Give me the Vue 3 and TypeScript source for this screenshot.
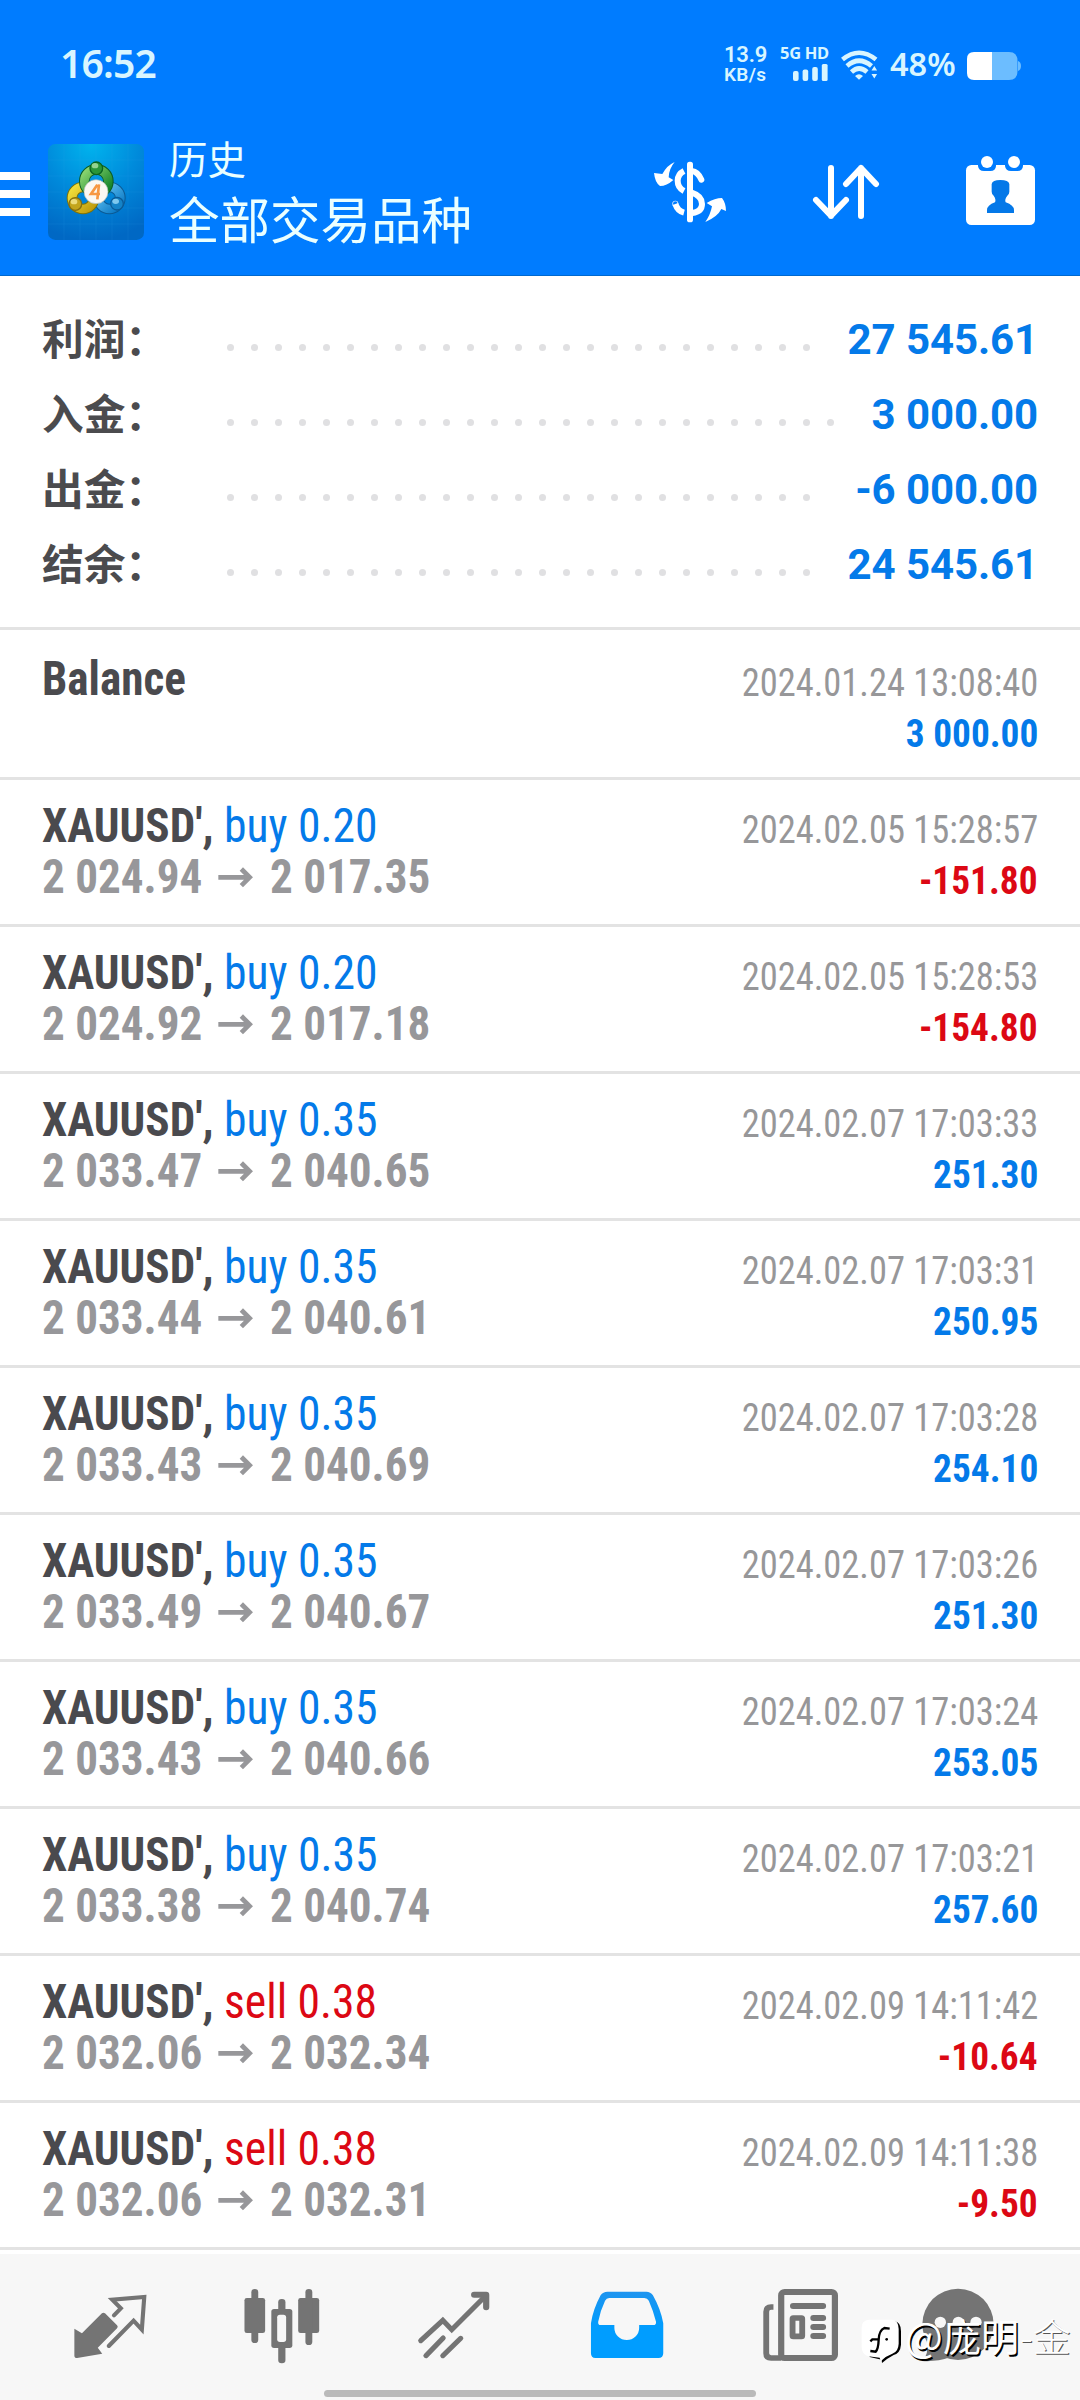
<script setup lang="ts">
interface SummaryRow { label: string; value: string; dots: number }
interface Deal { side: 'buy' | 'sell'; volume: string; open: string; close: string; time: string; profit: string }

const summary: SummaryRow[] = [
  { label: '利润：', value: '27 545.61', dots: 25 },
  { label: '入金：', value: '3 000.00', dots: 26 },
  { label: '出金：', value: '-6 000.00', dots: 25 },
  { label: '结余：', value: '24 545.61', dots: 25 },
]

const deals: Deal[] = [
  { side: 'buy', volume: '0.20', open: '2 024.94', close: '2 017.35', time: '2024.02.05 15:28:57', profit: '-151.80' },
  { side: 'buy', volume: '0.20', open: '2 024.92', close: '2 017.18', time: '2024.02.05 15:28:53', profit: '-154.80' },
  { side: 'buy', volume: '0.35', open: '2 033.47', close: '2 040.65', time: '2024.02.07 17:03:33', profit: '251.30' },
  { side: 'buy', volume: '0.35', open: '2 033.44', close: '2 040.61', time: '2024.02.07 17:03:31', profit: '250.95' },
  { side: 'buy', volume: '0.35', open: '2 033.43', close: '2 040.69', time: '2024.02.07 17:03:28', profit: '254.10' },
  { side: 'buy', volume: '0.35', open: '2 033.49', close: '2 040.67', time: '2024.02.07 17:03:26', profit: '251.30' },
  { side: 'buy', volume: '0.35', open: '2 033.43', close: '2 040.66', time: '2024.02.07 17:03:24', profit: '253.05' },
  { side: 'buy', volume: '0.35', open: '2 033.38', close: '2 040.74', time: '2024.02.07 17:03:21', profit: '257.60' },
  { side: 'sell', volume: '0.38', open: '2 032.06', close: '2 032.34', time: '2024.02.09 14:11:42', profit: '-10.64' },
  { side: 'sell', volume: '0.38', open: '2 032.06', close: '2 032.31', time: '2024.02.09 14:11:38', profit: '-9.50' },
]

const tone = (value: string) => (value.startsWith('-') ? 'red' : 'blue')
</script>

<template>
  <div class="screen">
    <header class="header">
      <div class="status">
        <span class="clock">16:52</span>
        <span class="speed"><b>13.9</b><i>KB/s</i></span>
        <span class="cell">
          <b>5G&nbsp;HD</b>
          <svg width="35" height="17" viewBox="0 0 35 17">
            <rect x="0" y="7" width="5.6" height="10" rx="2" />
            <rect x="9.6" y="5.5" width="5.6" height="11.5" rx="2" />
            <rect x="19.2" y="3" width="5.6" height="14" rx="2" />
            <rect x="28.8" y="0" width="5.8" height="17" rx="1.5" />
          </svg>
        </span>
        <svg class="wifi" width="38" height="30" viewBox="0 0 38 30">
          <g fill="none" stroke="#d8f5ff" stroke-width="4.6">
            <path d="M1.5 9.5 Q18 -4 35 9.5" />
            <path d="M6 16 Q18 5.500 30.500 16" />
            <path d="M10.500 22 Q18 15 26 22" />
          </g>
          <path d="M14 26 Q18 22.500 22 26 L18 29.800 Z M30.500 20.500 L33.300 16 L36.100 20.500 Z M30.500 24 L33.300 28.500 L36.100 24 Z" fill="#d8f5ff" />
        </svg>
        <span class="percent">48%</span>
        <svg class="battery" width="54" height="28" viewBox="0 0 54 28">
          <path d="M25 0 H42 Q50.500 0 50.500 9 V19 Q50.500 28 42 28 H25 Z M51 9 Q54 10 54 14 Q54 18 51 19 Z" fill="#6cbdff" />
          <path d="M25 0 H7 Q0 0 0 7 V21 Q0 28 7 28 H25 Z" fill="#fff" />
        </svg>
      </div>

      <div class="toolbar">
        <div class="menu"><span></span><span></span><span></span></div>
        <svg class="logo" width="96" height="96" viewBox="144 72 288 288">
          <defs>
            <radialGradient id="lg-bg" cx=".45" cy="0" r="1">
              <stop offset="0" stop-color="#00b4ee" /><stop offset=".5" stop-color="#008adb" /><stop offset="1" stop-color="#0068c4" />
            </radialGradient>
            <linearGradient id="lg-g" x1="0" y1="0" x2="1" y2="1"><stop offset="0" stop-color="#8fd873" /><stop offset="1" stop-color="#0b7d23" /></linearGradient>
            <linearGradient id="lg-y" x1="0" y1="0" x2="1" y2="1"><stop offset="0" stop-color="#f2e03c" /><stop offset="1" stop-color="#c09b0c" /></linearGradient>
            <linearGradient id="lg-b" x1="0" y1="0" x2="1" y2="1"><stop offset="0" stop-color="#69c8f5" /><stop offset="1" stop-color="#0877c4" /></linearGradient>
          </defs>
          <rect x="144" y="72" width="288" height="288" rx="22" fill="url(#lg-bg)" />
          <path d="M192 72V360 M240 72V360 M288 72V360 M336 72V360 M384 72V360 M144 120H432 M144 168H432 M144 216H432 M144 264H432 M144 312H432" stroke="#3aa6ec" stroke-opacity=".18" stroke-width="2" />
          <circle cx="328" cy="234" r="33" fill="none" stroke="#0b5a94" stroke-width="32" />
          <circle cx="328" cy="234" r="33" fill="none" stroke="url(#lg-b)" stroke-width="26" />
          <circle cx="249" cy="234" r="33" fill="none" stroke="#7c7208" stroke-width="32" />
          <circle cx="249" cy="234" r="33" fill="none" stroke="url(#lg-y)" stroke-width="26" />
          <circle cx="289" cy="184" r="36" fill="none" stroke="#0c5c25" stroke-width="32" />
          <circle cx="289" cy="184" r="36" fill="none" stroke="url(#lg-g)" stroke-width="26" />
          <circle cx="289" cy="145" r="19" fill="#2a9638" stroke="#0b6321" stroke-width="4" />
          <ellipse cx="285" cy="137" rx="10" ry="8" fill="#94d390" />
          <circle cx="226" cy="252" r="19" fill="#c3a51c" stroke="#846e10" stroke-width="4" />
          <ellipse cx="222" cy="245" rx="10" ry="8" fill="#ecdc7c" />
          <circle cx="351" cy="251" r="19" fill="#1583c7" stroke="#0b5b98" stroke-width="4" />
          <ellipse cx="347" cy="244" rx="10" ry="8" fill="#7ec8ee" />
          <circle cx="288" cy="215" r="36" fill="#fbf8f2" stroke="#aeb9b4" stroke-width="2" />
          <path d="M292 194 L273 222 H300 M297 193 L292 238" fill="none" stroke="#f79843" stroke-width="8" />
        </svg>
        <div class="titles">
          <span class="sub">历史</span>
          <span class="main">全部交易品种</span>
        </div>
        <svg class="t-dollar" width="76" height="64" viewBox="66 90 228 192">
          <g fill="#fff">
            <path d="M134 96 Q112 105 97 132 L72 129 Q75 158 90 168 Q110 168 130 150 L116 142 Q117 116 134 96 Z" />
            <path d="M226 276 Q263 260 274 237 L288 243 Q288 220 276 204 Q255 204 230 219 L246 229 Q241 255 226 276 Z" />
            <rect x="171" y="95" width="18" height="182" rx="8" />
          </g>
          <g fill="none" stroke="#fff" stroke-width="18">
            <path d="M162 123 Q143 133 143 152 Q143 173 162 183" />
            <path d="M185 123 Q204 125 214 149" stroke-linecap="round" />
            <path d="M185 188 Q216 198 216 222 Q216 245 187 249" />
            <path d="M136 222 Q143 243 162 248" />
            <circle cx="136" cy="221" r="1" stroke-width="16" />
          </g>
        </svg>
        <svg class="t-sort" width="68" height="60" viewBox="546 96 204 180">
          <g fill="none" stroke="#fff" stroke-width="18" stroke-linecap="round" stroke-linejoin="round">
            <path d="M603 114 V258 M558 210 L603 257 L648 210" />
            <path d="M693 258 V114 M648 162 L693 114 L738 162" />
          </g>
        </svg>
        <svg class="t-cal" width="71" height="71" viewBox="1005 75 213 213">
          <rect x="1008" y="105" width="207" height="180" rx="16" fill="#fff" />
          <path d="M1044 100 V108 Q1046 123 1062 123 H1081 Q1097 123 1098 108 V100 Z M1125 100 V108 Q1127 123 1143 123 H1162 Q1178 123 1179 108 V100 Z" fill="#007cff" />
          <circle cx="1071" cy="96" r="18" fill="#fff" />
          <circle cx="1152" cy="96" r="18" fill="#fff" />
          <path d="M1085 162 Q1087 150 1111 150 Q1136 150 1138 162 V185 Q1138 192 1132 197 Q1123 208 1127 217 Q1152 226 1152 240 V249 H1071 V240 Q1071 226 1095 217 Q1099 208 1091 197 Q1085 192 1085 185 Z" fill="#0478e8" />
        </svg>
      </div>
    </header>

    <section class="summary">
      <div v-for="row in summary" :key="row.label" class="sum-row">
        <span class="sum-label">{{ row.label }}</span>
        <span class="dots"><i v-for="n in row.dots" :key="n"></i></span>
        <span class="sum-value">{{ row.value }}</span>
      </div>
    </section>

    <main class="list">
      <div class="row balance">
        <div class="left"><div class="line"><span class="symbol">Balance</span></div></div>
        <div class="right">
          <span class="time">2024.01.24 13:08:40</span>
          <span class="profit blue">3 000.00</span>
        </div>
      </div>
      <div v-for="d in deals" :key="d.time" class="row">
        <div class="left">
          <div class="line">
            <span class="symbol">XAUUSD',</span>
            <span class="side" :class="d.side === 'buy' ? 'blue' : 'red'">{{ d.side }} {{ d.volume }}</span>
          </div>
          <div class="line">
            <span class="price open">{{ d.open }}</span>
            <svg class="arrow" width="35" height="21" viewBox="565 200 105 63">
              <path d="M566 231 H661 M635 206 L660 231 L635 256" fill="none" stroke="#97979a" stroke-width="14" />
            </svg>
            <span class="price">{{ d.close }}</span>
          </div>
        </div>
        <div class="right">
          <span class="time">{{ d.time }}</span>
          <span class="profit" :class="tone(d.profit)">{{ d.profit }}</span>
        </div>
      </div>
    </main>

    <nav class="tabs">
      <div class="tab">
        <svg viewBox="199.4 165 240 240" preserveAspectRatio="none">
          <path d="M295 250 Q299 246 304 250 L339 286 Q343 290 339 295 L283 353 L296 371 L223 384 Q215 384 215 377 V296 L237 310 Z" fill="#747474" />
          <path d="M315 348 L387 272 L411 299 L418 201 L325 209 L350 235 L330 256" fill="none" stroke="#747474" stroke-width="12" stroke-linecap="round" />
        </svg>
      </div>
      <div class="tab">
        <svg viewBox="698.9 165 240 240" preserveAspectRatio="none">
          <g fill="#747474">
            <rect x="709" y="204" width="60" height="105" rx="7" />
            <rect x="729" y="177" width="20" height="162" rx="10" />
            <rect x="865" y="204" width="61" height="105" rx="7" />
            <rect x="886" y="177" width="20" height="168" rx="10" />
            <rect x="807" y="207" width="21" height="50" rx="10" />
            <rect x="807" y="335" width="21" height="65" rx="10" />
            <rect x="787" y="237" width="61" height="117" rx="8" />
          </g>
          <rect x="804" y="254" width="26" height="82" rx="8" fill="#f7f7f7" />
        </svg>
      </div>
      <div class="tab">
        <svg viewBox="1198.4 165 240 240" preserveAspectRatio="none">
          <g fill="none" stroke="#747474" stroke-width="15" stroke-linecap="round">
            <path d="M1221 332 L1285 271 L1311 299 L1411 196" />
            <path d="M1376 194 H1411 V232" stroke-width="18" stroke-linejoin="round" />
            <path d="M1236 377 L1286 324 M1285 377 L1337 325" />
          </g>
        </svg>
      </div>
      <div class="tab">
        <svg viewBox="129.7 165 240 240" preserveAspectRatio="none">
          <defs><linearGradient id="inbox" x1="0" y1="0" x2="0" y2="1"><stop offset="0" stop-color="#1d94ef" /><stop offset=".55" stop-color="#009dff" /></linearGradient></defs>
          <path fill="url(#inbox)" fill-rule="evenodd" d="M195 185 H308 Q320 185 327 196 Q350 238 357 280 V370 Q357 384 343 384 H160 Q147 384 147 370 V280 Q153 238 175 196 Q182 185 195 185 Z M200 204 Q192 204 188 212 Q174 242 168 275 Q167 285 175 285 H215 V294 A36 36 0 0 0 287 294 V285 H328 Q337 285 336 275 Q328 242 315 212 Q311 204 302 204 Z" />
        </svg>
      </div>
      <div class="tab">
        <svg viewBox="629.2 165 240 240" preserveAspectRatio="none">
          <g fill="none" stroke="#747474">
            <rect x="699.500" y="186" width="156" height="198" rx="10" stroke-width="18" />
            <path d="M677 231 H670 Q656 231 656 245 V370 Q656 384 670 384 H700" stroke-width="17" />
            <path d="M734 228 H821 M793 264 H821 M793 291 H821 M793 318 H821" stroke-width="18" stroke-linecap="round" />
            <rect x="732.500" y="264" width="28" height="55" rx="2" stroke-width="17" />
          </g>
        </svg>
      </div>
      <div class="tab last">
        <svg class="chat" viewBox="204 15 240 240">
          <g fill="#747474">
            <circle cx="324" cy="133" r="107" />
            <path d="M230 180 L300 232 Q260 246 216 243 Q238 225 230 180 Z" />
          </g>
          <g fill="#f7f7f7"><circle cx="271" cy="127" r="17" /><circle cx="325" cy="127" r="17" /><circle cx="378" cy="127" r="17" /></g>
        </svg>
      </div>
    </nav>

    <div class="indicator"></div>

    <div class="mark">
      <svg width="43" height="45" viewBox="34 118 129 135">
        <path d="M62 125 H135 Q154 128 154 155 V195 Q152 220 132 226 L112 238 L97 250 L96 240 L60 232 L60 200 Z" fill="#000" />
        <path d="M58 120 H128 Q147 123 147 148 V192 Q146 216 128 222 L108 232 L93 245 L90 234 L56 230 Q36 224 36 203 V143 Q36 122 58 120 Z" fill="#fff" />
        <path d="M62 214 L78 216 Q86 208 87 180 Q88 152 104 145 L120 147 M62 185 L68 179 H88" fill="none" stroke="#000" stroke-width="7" />
        <circle cx="111" cy="179" r="4" fill="#000" />
      </svg>
      <span class="at">@</span><span class="name">庞明</span><span class="tail">-金</span>
    </div>
  </div>
</template>

<style>
body { background: #fff; }
</style>

<style scoped>
.screen { position: relative; width: 1080px; height: 2400px; overflow: hidden; background: #fff; display: flex; flex-direction: column; font-family: Roboto, "Noto Sans CJK SC", sans-serif; }
svg { display: block; flex: none; }
.header { box-sizing: border-box; height: 276px; flex: none; background: #007cff; border-bottom: 1px solid #0069cf; }
.status { height: 120px; display: flex; align-items: flex-start; color: #d8f5ff; font-family: "Noto Sans", sans-serif; font-weight: 600; white-space: nowrap; }
.clock { width: 664px; margin-left: 60px; padding-top: 38px; font-size: 39px; line-height: 50px; letter-spacing: -.8px; }
.speed { width: 56px; display: flex; flex-direction: column; padding-top: 44px; font-family: Roboto, sans-serif; }
.speed b { font-weight: 600; font-size: 22px; line-height: 21px; letter-spacing: -.2px; }
.speed i { font-style: normal; font-size: 19px; line-height: 19px; letter-spacing: .3px; }
.cell { width: 61px; display: flex; flex-direction: column; padding-top: 44px; }
.cell b { font-size: 16.500px; line-height: 18px; font-weight: 700; letter-spacing: -.3px; }
.cell svg { margin: 2px 0 0 12.500px; fill: #d8f5ff; }
.wifi { margin-top: 50px; }
.percent { width: 77px; margin-left: 11px; padding-top: 42px; font-size: 32.500px; line-height: 44px; font-weight: 600; }
.battery { margin-top: 52px; }
.toolbar { display: flex; align-items: flex-start; height: 155px; }
.menu { width: 30px; margin: 52px 18px 0 0; display: flex; flex-direction: column; gap: 10px; }
.menu span { height: 8px; background: #fff; }
.logo { margin-top: 24px; }
.titles { width: 483px; margin-left: 25px; padding-top: 9px; display: flex; flex-direction: column; color: #eaffff; font-family: "Noto Sans CJK SC", sans-serif; }
.sub { font-size: 38.500px; line-height: 56px; }
.main { font-size: 50.500px; line-height: 64px; }
.t-dollar { margin-top: 40px; }
.t-sort { margin: 42px 0 0 84px; }
.t-cal { margin: 35px 0 0 85px; }

.summary { box-sizing: border-box; height: 351px; flex: none; padding: 26px 42px 0 42px; }
.sum-row { height: 75px; display: flex; align-items: flex-start; }
.sum-label { width: 184.500px; font: 700 41.700px/71px "Noto Sans CJK SC", sans-serif; color: #4b4b4e; white-space: nowrap; }
.dots { display: flex; gap: 17px; margin-top: 42px; }
.dots i { width: 7px; height: 7px; border-radius: 50%; background: #e0e0e2; }
.sum-value { margin-left: auto; font-weight: 700; font-size: 42px; line-height: 75px; letter-spacing: -.1px; color: #047ae9; white-space: pre; }

.list { flex: none; border-bottom: 3px solid #e3e3e3; font-family: "Roboto Condensed", Roboto, sans-serif; white-space: pre; }
.row { box-sizing: border-box; height: 147px; border-top: 3px solid #e3e3e3; padding: 21px 42px 0 42px; display: flex; justify-content: space-between; }
.balance { height: 150px; padding-top: 24px; }
.line { display: flex; height: 51px; align-items: flex-start; font-size: 47.500px; line-height: 51px; }
.symbol, .price, .side { transform: scaleX(.95); transform-origin: 0 50%; }
.symbol { width: 182px; font-weight: 700; color: #4a4a4e; }
.side { transform: scaleX(.96); }
.price { font-weight: 700; color: #97979a; }
.open { width: 176px; }
.arrow { margin: 15px 17px 0 0; }
.right { display: flex; flex-direction: column; align-items: flex-end; padding-top: 3px; font-size: 39.500px; line-height: 51px; }
.time { color: #979799; transform: scaleX(.923); transform-origin: 100% 50%; }
.profit { font-weight: 700; transform: scaleX(.945); transform-origin: 100% 50%; }
.blue { color: #047ae9; }
.red { color: #dc0814; }

.tabs { box-sizing: border-box; flex: 1; margin-top: 4px; padding: 31px 0 0 24px; display: flex; background: #f7f7f7; }
.tab { width: 172px; display: flex; justify-content: center; }
.tab svg { width: 82.640px; height: 80px; }
.tab.last { width: 148px; }
.tab svg.chat { width: 80px; }
.indicator { position: absolute; left: 324px; top: 2390px; width: 432px; height: 7px; border-radius: 4px; background: #bababa; }
.mark { position: absolute; left: 861px; top: 2319px; display: flex; align-items: flex-start; color: #fff; font: 400 38px/32px "Noto Sans CJK SC", sans-serif; text-shadow: 1.500px 1.500px 0 #000; white-space: nowrap; }
.at { margin-left: 1px; width: 38px; font-size: 40px; }
.name { width: 77px; }
.tail { font-weight: 300; text-shadow: 1px 1px 0 #555; }
</style>
